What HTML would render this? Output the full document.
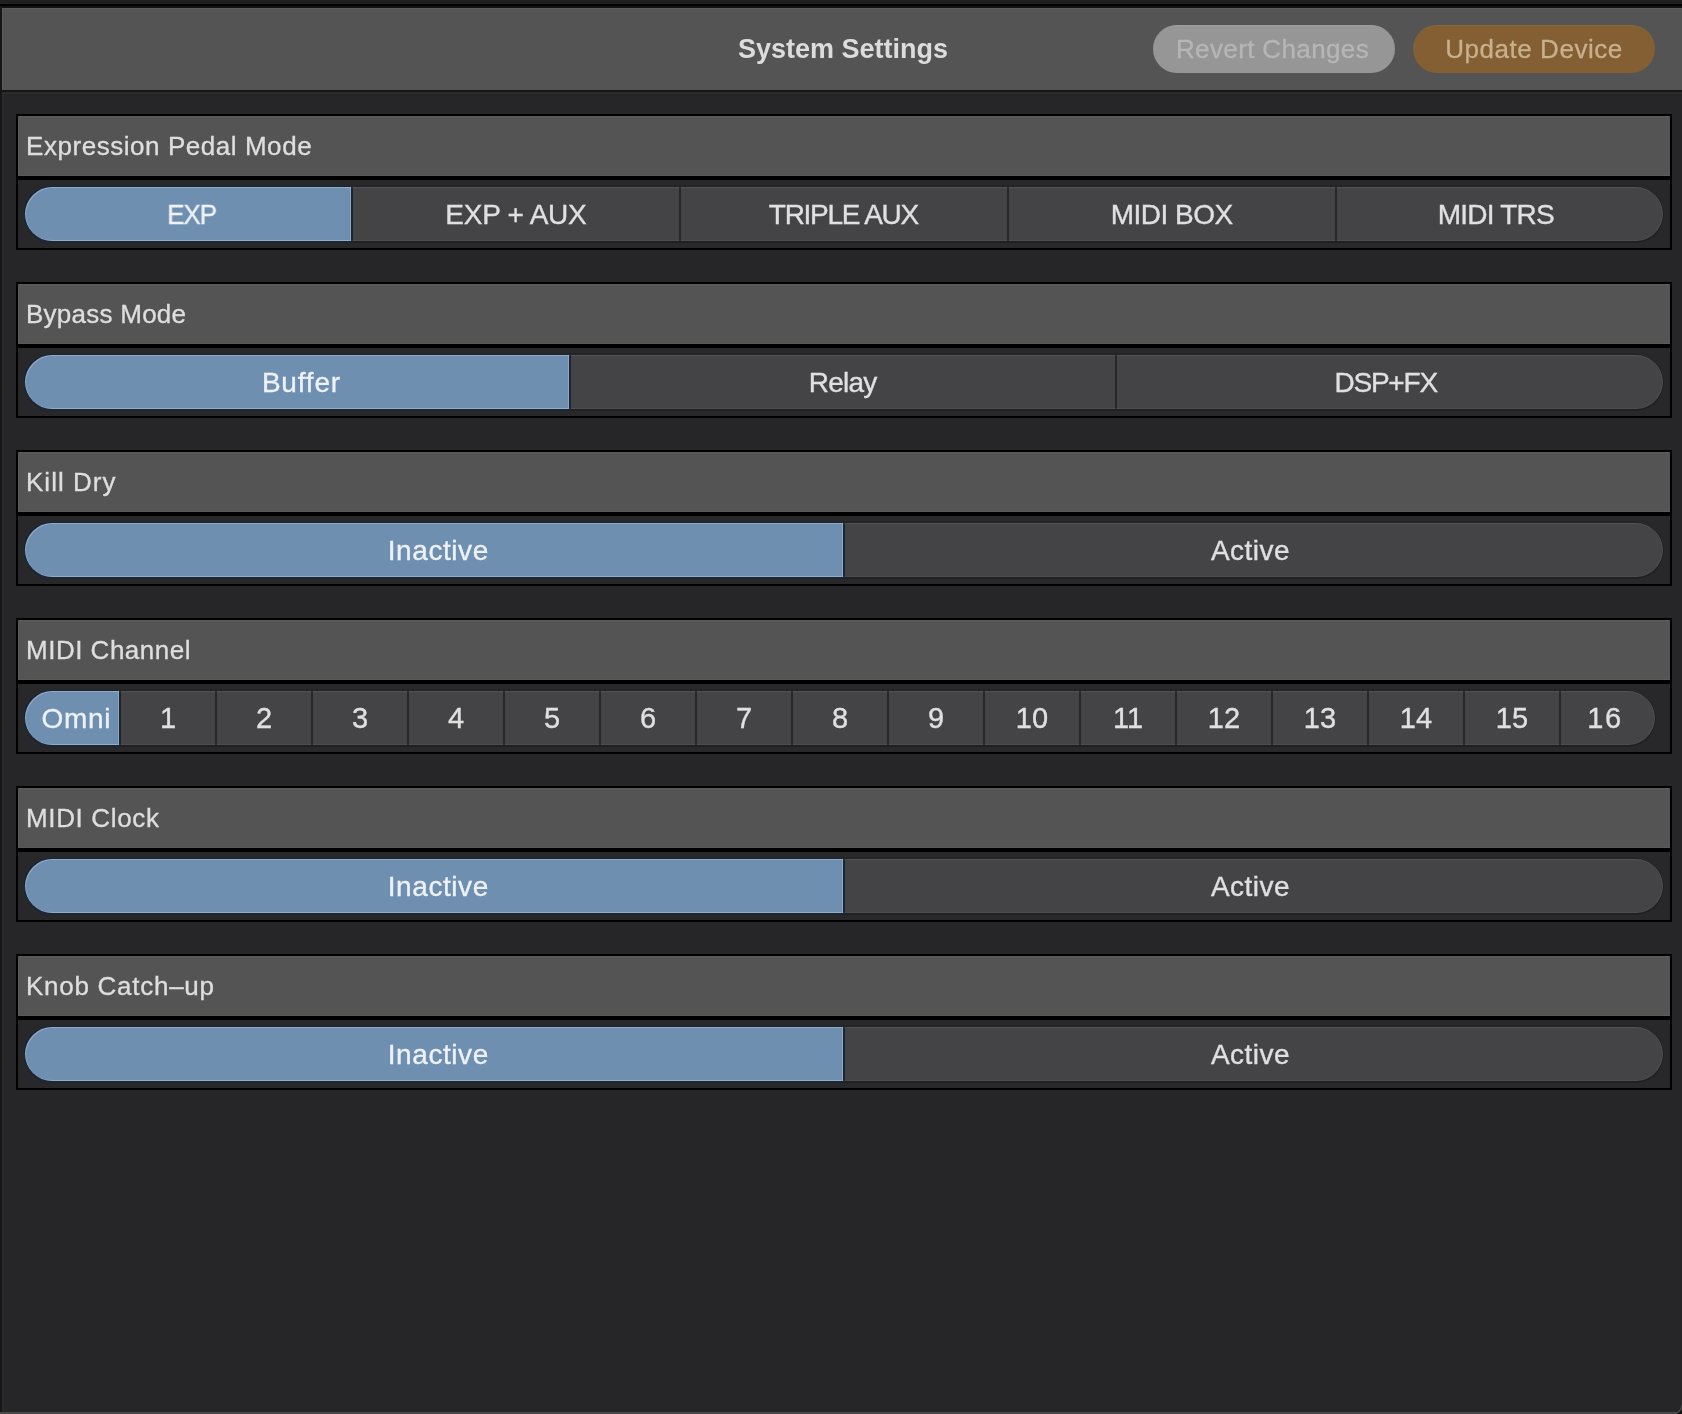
<!DOCTYPE html><html><head><meta charset="utf-8"><title>System Settings</title><style>
*{margin:0;padding:0;box-sizing:border-box}
html,body{width:1682px;height:1414px;overflow:hidden;background:#262628;font-family:"Liberation Sans", sans-serif}
.a{position:absolute}
.ttl,.lbl,.hd{will-change:transform}
.ttl{position:absolute;white-space:nowrap;color:#dedede;font-size:26px;line-height:30px;letter-spacing:0.45px;-webkit-text-stroke:0.35px #dedede}
.seg{position:absolute;top:0;height:54px;background:#444446;border-top:1px solid #4a4a4c}
.on{background:#6f8fb1;border:0}
.lbl{position:absolute;top:0;height:54px;color:#e0e0e0;font-size:28px;line-height:56px;text-align:center;white-space:nowrap;-webkit-text-stroke:0.35px #e0e0e0}
.lbl.w{color:#eef2f6;-webkit-text-stroke:0.35px #eef2f6}
.div{position:absolute;top:0;width:2px;height:54px;background:#262627}
</style></head><body>
<div class="a" style="left:0;top:0;width:1682px;height:4px;background:#202020"></div>
<div class="a" style="left:0;top:4px;width:1682px;height:2px;background:#000"></div>
<div class="a" style="left:0;top:6px;width:1682px;height:2px;background:#131313"></div>
<div class="a" style="left:0;top:6px;width:2px;height:1408px;background:#171718"></div>
<div class="a" style="left:2px;top:94px;width:2px;height:1318px;background:#2a2a2b"></div>
<div class="a" style="left:2px;top:8px;width:1680px;height:82px;background:#545454;border-top:1px solid #5c5c5c;border-left:1px solid #5a5a5a"></div>
<div class="a" style="left:2px;top:90px;width:1680px;height:2px;background:#161616"></div>
<div class="a" style="left:2px;top:92px;width:1680px;height:2px;background:#2b2b2c"></div>
<div class="a hd" style="left:0;top:34px;width:1686px;text-align:center;color:#dcdcdc;font-weight:bold;font-size:27px;line-height:30px;white-space:nowrap">System Settings</div>
<div class="a hd" style="left:1153px;top:25px;width:242px;height:48px;border-radius:24px;background:#969696;border-top:1px solid #9e9e9e;color:#b6b6b6;font-size:26px;line-height:47px;text-align:center;white-space:nowrap;letter-spacing:0.37px;padding-right:3px;-webkit-text-stroke:0.3px #b6b6b6">Revert Changes</div>
<div class="a hd" style="left:1413px;top:25px;width:242px;height:48px;border-radius:24px;background:#835f33;border-top:1px solid #8a673b;color:#c8b08c;font-size:26px;line-height:47px;text-align:center;white-space:nowrap;letter-spacing:0.55px;-webkit-text-stroke:0.3px #c8b08c">Update Device</div>
<div class="a" style="left:16px;top:114px;width:1656px;height:136px;background:#000"></div>
<div class="a" style="left:18px;top:116px;width:1652px;height:60px;background:#545454;border-top:1px solid #5b5b5b;border-left:1px solid #5a5a5a;border-bottom:1px solid #5a5a5a"></div>
<div class="ttl" style="left:25.5px;top:131px;letter-spacing:0.55px">Expression Pedal Mode</div>
<div class="a" style="left:18px;top:180px;width:1652px;height:68px;background:#28282a"></div>
<div class="a" style="left:23.0px;top:185.5px;width:1641px;height:57px;border-radius:28.5px;background:linear-gradient(90deg,#1b2633 329.5px,#212122 329.5px)"></div>
<div class="a" style="left:24.5px;top:187px;width:1638px;height:54px;border-radius:27px;overflow:hidden">
<div class="seg on" style="left:-3.5px;width:330.0px"></div>
<div class="seg" style="left:328.5px;width:326.0px"></div>
<div class="seg" style="left:656.5px;width:326.0px"></div>
<div class="seg" style="left:984.5px;width:326.0px"></div>
<div class="seg" style="left:1312.5px;width:327.5px"></div>
<div class="div" style="left:326.5px;background:#1b2633"></div>
<div class="div" style="left:654.5px;background:#262627"></div>
<div class="div" style="left:982.5px;background:#262627"></div>
<div class="div" style="left:1310.5px;background:#262627"></div>
<div class="a" style="left:0;top:0;width:1638px;height:54px;border-radius:27px;box-shadow:inset 0 0 0 1px rgba(255,255,255,0.05)"></div>
<div class="a" style="left:0;top:0;width:326.5px;height:54px;border-radius:27px 0 0 27px;box-shadow:inset 1px 1px 0 0 rgba(255,255,255,0.22),inset -1px -1px 0 0 rgba(255,255,255,0.22)"></div>
<div class="lbl w" style="left:3.00px;width:328.00px;letter-spacing:-1.2px;text-indent:-1.2px;transform:scaleX(0.93);">EXP</div>
<div class="lbl" style="left:327.50px;width:328.00px;letter-spacing:-0.26px;text-indent:-0.26px;">EXP + AUX</div>
<div class="lbl" style="left:655.50px;width:328.00px;letter-spacing:-1.28px;text-indent:-1.28px;">TRIPLE AUX</div>
<div class="lbl" style="left:983.50px;width:328.00px;letter-spacing:-0.5px;text-indent:-0.5px;">MIDI BOX</div>
<div class="lbl" style="left:1308.90px;width:326.50px;letter-spacing:-0.79px;text-indent:-0.79px;">MIDI TRS</div>
</div>
<div class="a" style="left:16px;top:282px;width:1656px;height:136px;background:#000"></div>
<div class="a" style="left:18px;top:284px;width:1652px;height:60px;background:#545454;border-top:1px solid #5b5b5b;border-left:1px solid #5a5a5a;border-bottom:1px solid #5a5a5a"></div>
<div class="ttl" style="left:25.5px;top:299px;letter-spacing:0.25px">Bypass Mode</div>
<div class="a" style="left:18px;top:348px;width:1652px;height:68px;background:#28282a"></div>
<div class="a" style="left:23.0px;top:353.5px;width:1641px;height:57px;border-radius:28.5px;background:linear-gradient(90deg,#1b2633 547.5px,#212122 547.5px)"></div>
<div class="a" style="left:24.5px;top:355px;width:1638px;height:54px;border-radius:27px;overflow:hidden">
<div class="seg on" style="left:-3.5px;width:548.0px"></div>
<div class="seg" style="left:546.5px;width:544.0px"></div>
<div class="seg" style="left:1092.5px;width:547.5px"></div>
<div class="div" style="left:544.5px;background:#1b2633"></div>
<div class="div" style="left:1090.5px;background:#262627"></div>
<div class="a" style="left:0;top:0;width:1638px;height:54px;border-radius:27px;box-shadow:inset 0 0 0 1px rgba(255,255,255,0.05)"></div>
<div class="a" style="left:0;top:0;width:544.5px;height:54px;border-radius:27px 0 0 27px;box-shadow:inset 1px 1px 0 0 rgba(255,255,255,0.22),inset -1px -1px 0 0 rgba(255,255,255,0.22)"></div>
<div class="lbl w" style="left:3.00px;width:546.00px;letter-spacing:0.8px;text-indent:0.8px;">Buffer</div>
<div class="lbl" style="left:545.50px;width:546.00px;letter-spacing:-0.75px;text-indent:-0.75px;">Relay</div>
<div class="lbl" style="left:1088.90px;width:546.50px;letter-spacing:-1.2px;text-indent:-1.2px;">DSP+FX</div>
</div>
<div class="a" style="left:16px;top:450px;width:1656px;height:136px;background:#000"></div>
<div class="a" style="left:18px;top:452px;width:1652px;height:60px;background:#545454;border-top:1px solid #5b5b5b;border-left:1px solid #5a5a5a;border-bottom:1px solid #5a5a5a"></div>
<div class="ttl" style="left:25.5px;top:467px;letter-spacing:1.02px">Kill Dry</div>
<div class="a" style="left:18px;top:516px;width:1652px;height:68px;background:#28282a"></div>
<div class="a" style="left:23.0px;top:521.5px;width:1641px;height:57px;border-radius:28.5px;background:linear-gradient(90deg,#1b2633 821.5px,#212122 821.5px)"></div>
<div class="a" style="left:24.5px;top:523px;width:1638px;height:54px;border-radius:27px;overflow:hidden">
<div class="seg on" style="left:-3.5px;width:822.0px"></div>
<div class="seg" style="left:820.5px;width:819.5px"></div>
<div class="div" style="left:818.5px;background:#1b2633"></div>
<div class="a" style="left:0;top:0;width:1638px;height:54px;border-radius:27px;box-shadow:inset 0 0 0 1px rgba(255,255,255,0.05)"></div>
<div class="a" style="left:0;top:0;width:818.5px;height:54px;border-radius:27px 0 0 27px;box-shadow:inset 1px 1px 0 0 rgba(255,255,255,0.22),inset -1px -1px 0 0 rgba(255,255,255,0.22)"></div>
<div class="lbl w" style="left:3.00px;width:820.00px;letter-spacing:0.58px;text-indent:0.58px;">Inactive</div>
<div class="lbl" style="left:816.90px;width:818.50px;letter-spacing:0.5px;text-indent:0.5px;">Active</div>
</div>
<div class="a" style="left:16px;top:618px;width:1656px;height:136px;background:#000"></div>
<div class="a" style="left:18px;top:620px;width:1652px;height:60px;background:#545454;border-top:1px solid #5b5b5b;border-left:1px solid #5a5a5a;border-bottom:1px solid #5a5a5a"></div>
<div class="ttl" style="left:25.5px;top:635px;letter-spacing:0.5px">MIDI Channel</div>
<div class="a" style="left:18px;top:684px;width:1652px;height:68px;background:#28282a"></div>
<div class="a" style="left:23.0px;top:689.5px;width:1633px;height:57px;border-radius:28.5px;background:linear-gradient(90deg,#1b2633 97.5px,#212122 97.5px)"></div>
<div class="a" style="left:24.5px;top:691px;width:1630px;height:54px;border-radius:27px;overflow:hidden">
<div class="seg on" style="left:-3.5px;width:98.0px"></div>
<div class="seg" style="left:96.5px;width:94.0px"></div>
<div class="seg" style="left:192.5px;width:94.0px"></div>
<div class="seg" style="left:288.5px;width:94.0px"></div>
<div class="seg" style="left:384.5px;width:94.0px"></div>
<div class="seg" style="left:480.5px;width:94.0px"></div>
<div class="seg" style="left:576.5px;width:94.0px"></div>
<div class="seg" style="left:672.5px;width:94.0px"></div>
<div class="seg" style="left:768.5px;width:94.0px"></div>
<div class="seg" style="left:864.5px;width:94.0px"></div>
<div class="seg" style="left:960.5px;width:94.0px"></div>
<div class="seg" style="left:1056.5px;width:94.0px"></div>
<div class="seg" style="left:1152.5px;width:94.0px"></div>
<div class="seg" style="left:1248.5px;width:94.0px"></div>
<div class="seg" style="left:1344.5px;width:94.0px"></div>
<div class="seg" style="left:1440.5px;width:94.0px"></div>
<div class="seg" style="left:1536.5px;width:95.5px"></div>
<div class="div" style="left:94.5px;background:#1b2633"></div>
<div class="div" style="left:190.5px;background:#262627"></div>
<div class="div" style="left:286.5px;background:#262627"></div>
<div class="div" style="left:382.5px;background:#262627"></div>
<div class="div" style="left:478.5px;background:#262627"></div>
<div class="div" style="left:574.5px;background:#262627"></div>
<div class="div" style="left:670.5px;background:#262627"></div>
<div class="div" style="left:766.5px;background:#262627"></div>
<div class="div" style="left:862.5px;background:#262627"></div>
<div class="div" style="left:958.5px;background:#262627"></div>
<div class="div" style="left:1054.5px;background:#262627"></div>
<div class="div" style="left:1150.5px;background:#262627"></div>
<div class="div" style="left:1246.5px;background:#262627"></div>
<div class="div" style="left:1342.5px;background:#262627"></div>
<div class="div" style="left:1438.5px;background:#262627"></div>
<div class="div" style="left:1534.5px;background:#262627"></div>
<div class="a" style="left:0;top:0;width:1630px;height:54px;border-radius:27px;box-shadow:inset 0 0 0 1px rgba(255,255,255,0.05)"></div>
<div class="a" style="left:0;top:0;width:94.5px;height:54px;border-radius:27px 0 0 27px;box-shadow:inset 1px 1px 0 0 rgba(255,255,255,0.22),inset -1px -1px 0 0 rgba(255,255,255,0.22)"></div>
<div class="lbl w" style="left:3.00px;width:96.00px;letter-spacing:0.66px;text-indent:0.66px;">Omni</div>
<div class="lbl" style="left:95.50px;width:96.00px;letter-spacing:0px;text-indent:0px;font-size:29px;line-height:55px;">1</div>
<div class="lbl" style="left:191.50px;width:96.00px;letter-spacing:0px;text-indent:0px;font-size:29px;line-height:55px;">2</div>
<div class="lbl" style="left:287.50px;width:96.00px;letter-spacing:0px;text-indent:0px;font-size:29px;line-height:55px;">3</div>
<div class="lbl" style="left:383.50px;width:96.00px;letter-spacing:0px;text-indent:0px;font-size:29px;line-height:55px;">4</div>
<div class="lbl" style="left:479.50px;width:96.00px;letter-spacing:0px;text-indent:0px;font-size:29px;line-height:55px;">5</div>
<div class="lbl" style="left:575.50px;width:96.00px;letter-spacing:0px;text-indent:0px;font-size:29px;line-height:55px;">6</div>
<div class="lbl" style="left:671.50px;width:96.00px;letter-spacing:0px;text-indent:0px;font-size:29px;line-height:55px;">7</div>
<div class="lbl" style="left:767.50px;width:96.00px;letter-spacing:0px;text-indent:0px;font-size:29px;line-height:55px;">8</div>
<div class="lbl" style="left:863.50px;width:96.00px;letter-spacing:0px;text-indent:0px;font-size:29px;line-height:55px;">9</div>
<div class="lbl" style="left:959.50px;width:96.00px;letter-spacing:0px;text-indent:0px;font-size:29px;line-height:55px;">10</div>
<div class="lbl" style="left:1055.50px;width:96.00px;letter-spacing:0px;text-indent:0px;font-size:29px;line-height:55px;">11</div>
<div class="lbl" style="left:1151.50px;width:96.00px;letter-spacing:0px;text-indent:0px;font-size:29px;line-height:55px;">12</div>
<div class="lbl" style="left:1247.50px;width:96.00px;letter-spacing:0px;text-indent:0px;font-size:29px;line-height:55px;">13</div>
<div class="lbl" style="left:1343.50px;width:96.00px;letter-spacing:0px;text-indent:0px;font-size:29px;line-height:55px;">14</div>
<div class="lbl" style="left:1439.50px;width:96.00px;letter-spacing:0.0px;text-indent:0.0px;font-size:29px;line-height:55px;">15</div>
<div class="lbl" style="left:1532.90px;width:94.50px;letter-spacing:1.5px;text-indent:1.5px;font-size:29px;line-height:55px;">16</div>
</div>
<div class="a" style="left:16px;top:786px;width:1656px;height:136px;background:#000"></div>
<div class="a" style="left:18px;top:788px;width:1652px;height:60px;background:#545454;border-top:1px solid #5b5b5b;border-left:1px solid #5a5a5a;border-bottom:1px solid #5a5a5a"></div>
<div class="ttl" style="left:25.5px;top:803px;letter-spacing:0.65px">MIDI Clock</div>
<div class="a" style="left:18px;top:852px;width:1652px;height:68px;background:#28282a"></div>
<div class="a" style="left:23.0px;top:857.5px;width:1641px;height:57px;border-radius:28.5px;background:linear-gradient(90deg,#1b2633 821.5px,#212122 821.5px)"></div>
<div class="a" style="left:24.5px;top:859px;width:1638px;height:54px;border-radius:27px;overflow:hidden">
<div class="seg on" style="left:-3.5px;width:822.0px"></div>
<div class="seg" style="left:820.5px;width:819.5px"></div>
<div class="div" style="left:818.5px;background:#1b2633"></div>
<div class="a" style="left:0;top:0;width:1638px;height:54px;border-radius:27px;box-shadow:inset 0 0 0 1px rgba(255,255,255,0.05)"></div>
<div class="a" style="left:0;top:0;width:818.5px;height:54px;border-radius:27px 0 0 27px;box-shadow:inset 1px 1px 0 0 rgba(255,255,255,0.22),inset -1px -1px 0 0 rgba(255,255,255,0.22)"></div>
<div class="lbl w" style="left:3.00px;width:820.00px;letter-spacing:0.58px;text-indent:0.58px;">Inactive</div>
<div class="lbl" style="left:816.90px;width:818.50px;letter-spacing:0.5px;text-indent:0.5px;">Active</div>
</div>
<div class="a" style="left:16px;top:954px;width:1656px;height:136px;background:#000"></div>
<div class="a" style="left:18px;top:956px;width:1652px;height:60px;background:#545454;border-top:1px solid #5b5b5b;border-left:1px solid #5a5a5a;border-bottom:1px solid #5a5a5a"></div>
<div class="ttl" style="left:25.5px;top:971px;letter-spacing:0.73px">Knob Catch–up</div>
<div class="a" style="left:18px;top:1020px;width:1652px;height:68px;background:#28282a"></div>
<div class="a" style="left:23.0px;top:1025.5px;width:1641px;height:57px;border-radius:28.5px;background:linear-gradient(90deg,#1b2633 821.5px,#212122 821.5px)"></div>
<div class="a" style="left:24.5px;top:1027px;width:1638px;height:54px;border-radius:27px;overflow:hidden">
<div class="seg on" style="left:-3.5px;width:822.0px"></div>
<div class="seg" style="left:820.5px;width:819.5px"></div>
<div class="div" style="left:818.5px;background:#1b2633"></div>
<div class="a" style="left:0;top:0;width:1638px;height:54px;border-radius:27px;box-shadow:inset 0 0 0 1px rgba(255,255,255,0.05)"></div>
<div class="a" style="left:0;top:0;width:818.5px;height:54px;border-radius:27px 0 0 27px;box-shadow:inset 1px 1px 0 0 rgba(255,255,255,0.22),inset -1px -1px 0 0 rgba(255,255,255,0.22)"></div>
<div class="lbl w" style="left:3.00px;width:820.00px;letter-spacing:0.58px;text-indent:0.58px;">Inactive</div>
<div class="lbl" style="left:816.90px;width:818.50px;letter-spacing:0.5px;text-indent:0.5px;">Active</div>
</div>
<div class="a" style="left:0;top:1412px;width:1682px;height:2px;background:#494949"></div>
<svg class="a" style="left:1662px;top:1394px" width="20" height="20"><path d="M20 10 A10 10 0 0 1 10 20 L20 20 Z" fill="#15120f"/><path d="M20 10.5 A9.5 9.5 0 0 1 10.5 20" stroke="#4a4a4c" stroke-width="1.3" fill="none"/></svg>
</body></html>
